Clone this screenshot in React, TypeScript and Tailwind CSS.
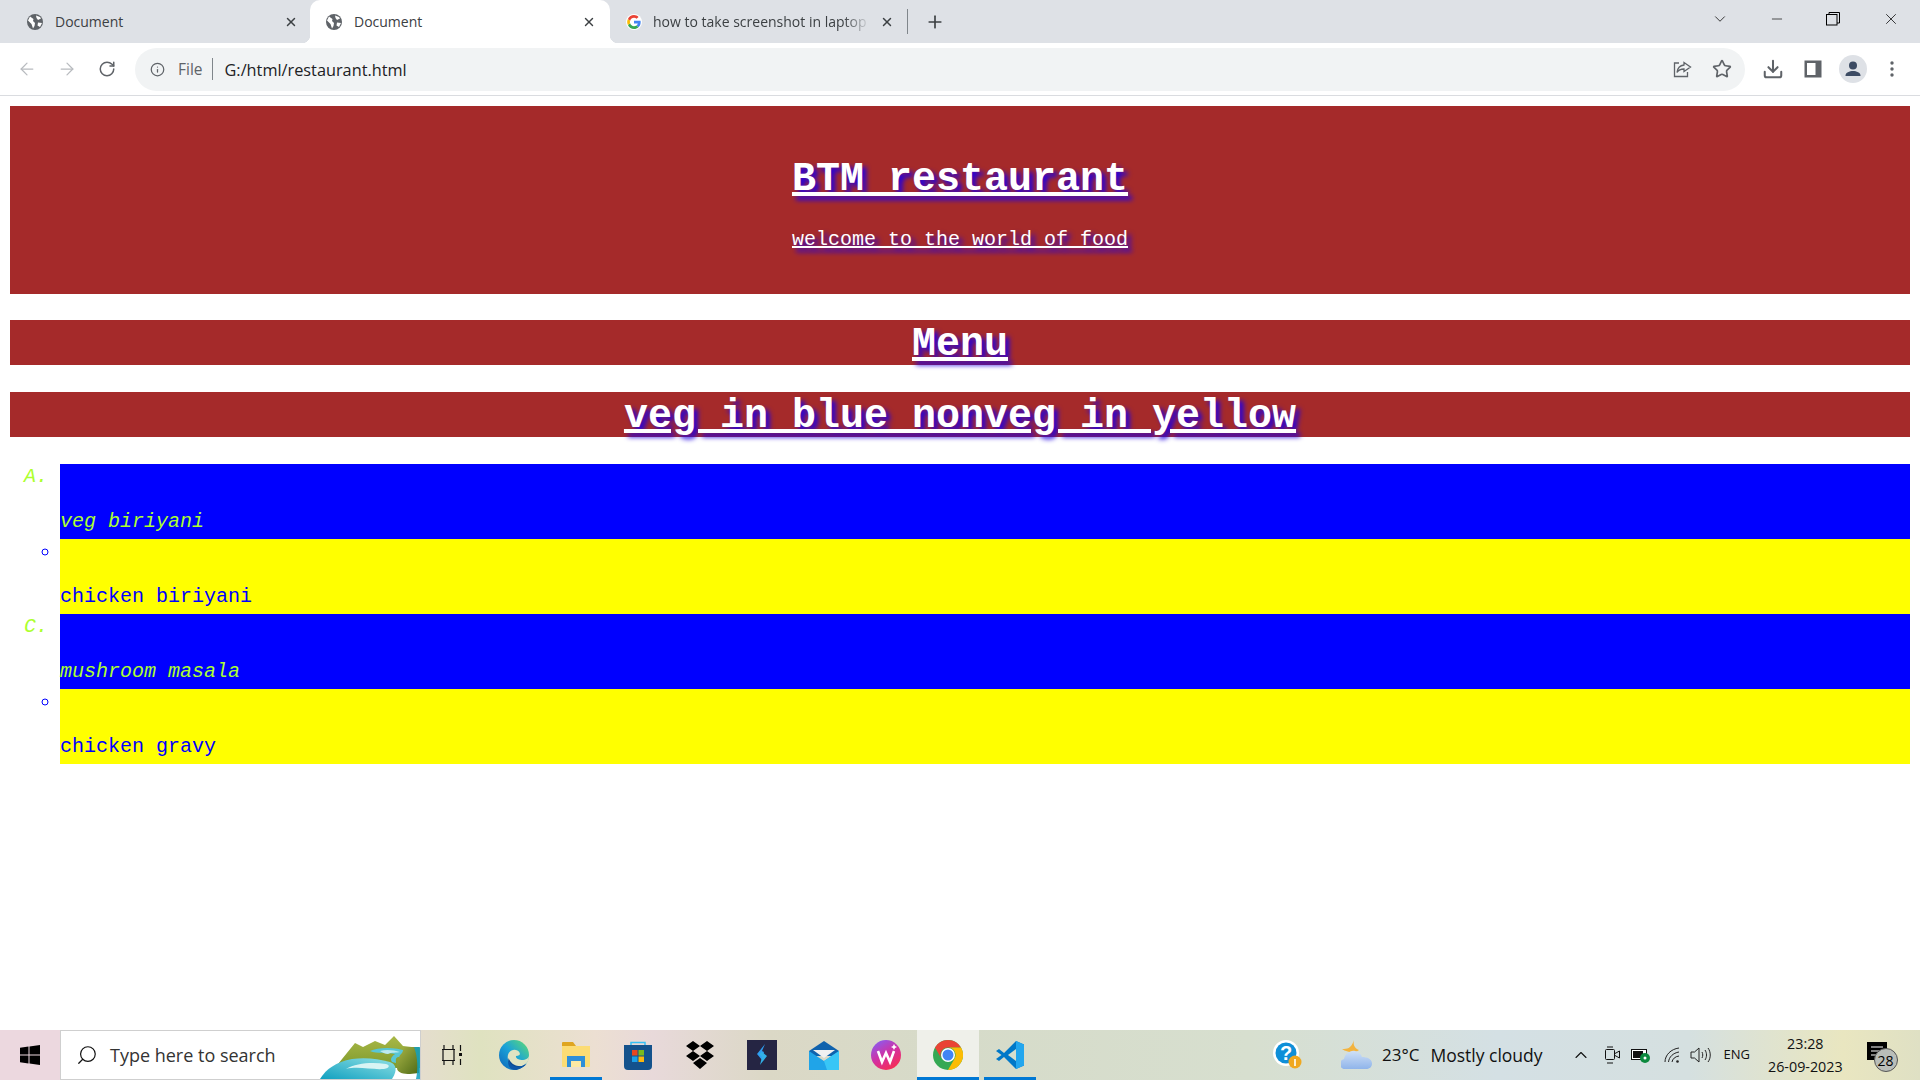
import { ArrowLeft, ArrowRight, ChevronDown, ChevronUp, Download, Info, Minus, Plus, RotateCw, Search, Star, X } from "lucide-react"

const Globe = () => (
  <svg width="16" height="16" viewBox="0 0 16 16">
    <circle cx="8" cy="8" r="8" fill="#5f6368" />
    <path d="M3 2.500 6.500 5 6 7 8 9 7.500 12 6 14.500 4.500 10 1 6.500ZM9 1.500 13 3 14 4.500 11 6 9.500 4ZM11 8.500 15 9 13 13 10.500 11.500Z" fill="#fff" />
  </svg>
)

const GoogleG = () => (
  <svg width="16" height="16" viewBox="0 0 48 48">
    <circle cx="24" cy="24" r="24" fill="#fff" />
    <path d="M44 24.500c0-1.500-.1-2.900-.4-4.200H24v8h11.300c-.5 2.600-2 4.800-4.200 6.300l6.500 5c3.800-3.500 6.400-8.700 6.400-15.100Z" fill="#4285f4" />
    <path d="M24 45c5.500 0 10-1.800 13.600-5.400l-6.500-5c-1.800 1.200-4.200 2-7.100 2-5.400 0-10-3.700-11.600-8.600l-6.700 5.200C9 40.900 15.900 45 24 45Z" fill="#34a853" />
    <path d="M12.400 28c-.4-1.200-.7-2.600-.7-4s.3-2.800.7-4l-6.700-5.200C4.300 17.600 3.500 20.700 3.500 24s.8 6.400 2.200 9.200Z" fill="#fbbc05" />
    <path d="M24 11.400c3 0 5.700 1 7.800 3.100l5.800-5.800C34 5.300 29.500 3 24 3 15.900 3 9 7.100 5.700 14.800l6.700 5.200C14 15.100 18.600 11.400 24 11.400Z" fill="#ea4335" />
  </svg>
)

const Flare = ({ side }: { side: "left" | "right" }) =>
  side === "left" ? (
    <span className="absolute bottom-0 left-[-8px] h-2 w-2 bg-[radial-gradient(circle_at_0_0,transparent_8px,white_8.5px)]" />
  ) : (
    <span className="absolute bottom-0 right-[-8px] h-2 w-2 bg-[radial-gradient(circle_at_100%_0,transparent_8px,white_8.5px)]" />
  )

const ShareIcon = () => (
  <svg width="20" height="20" viewBox="0 0 20 20" fill="none" stroke="#5f6368" strokeWidth="1.300">
    <path d="M7 4H2.500v13.500h13V13" />
    <path d="M12 3.500 18.500 8 12 12.500V10c-3.500 0-5.500 1-7 3.500.5-4.500 3-7 7-7.500Z" />
  </svg>
)

const PanelIcon = () => (
  <svg width="18" height="18" viewBox="0 0 18 18">
    <rect x="0.500" y="0.500" width="17" height="17" fill="#5f6368" />
    <rect x="3" y="3" width="8.500" height="12" fill="#fff" />
  </svg>
)

const Avatar = () => (
  <svg width="28" height="28" viewBox="0 0 28 28">
    <circle cx="14" cy="14" r="14" fill="#dee1e6" />
    <circle cx="14" cy="10.500" r="4" fill="#3c4b63" />
    <path d="M6.500 20.500c0-3 4-4.500 7.500-4.500s7.500 1.500 7.500 4.500V21h-15Z" fill="#3c4b63" />
  </svg>
)

const WindowsLogo = () => (
  <svg width="20" height="20" viewBox="0 0 20 20" fill="#000">
    <path d="M0 2.800 8.500 1.600V9.500H0ZM9.500 1.400 20 0V9.500H9.500ZM0 10.500H8.500V18.400L0 17.200ZM9.500 10.500H20V20L9.500 18.600Z" />
  </svg>
)

const SearchArt = () => (
  <svg width="100" height="50" viewBox="0 0 100 50" className="absolute bottom-0 right-0">
    <defs>
      <linearGradient id="hill" x1="0" y1="0" x2="0" y2="1">
        <stop offset="0" stopColor="#a9b847" />
        <stop offset="1" stopColor="#7f9a2c" />
      </linearGradient>
      <linearGradient id="hillDark" x1="0" y1="0" x2="1" y2="1">
        <stop offset="0" stopColor="#a8b446" />
        <stop offset="1" stopColor="#4e6a16" />
      </linearGradient>
      <linearGradient id="water" x1="0" y1="1" x2="1" y2="0">
        <stop offset="0" stopColor="#10a0c0" />
        <stop offset="1" stopColor="#8fe0e4" />
      </linearGradient>
    </defs>
    <path d="M18 35 35 14l8 4 12-6 10 4 9-9 9 10 17 2v20H30Z" fill="url(#hill)" />
    <path d="M0 50C6 40 16 33 32 30c14-2 26 0 38 3 6 2 8 8 2 17Z" fill="url(#water)" />
    <path d="M26 40c10-6 26-7 40-5 4 1 4 4-2 5-12 1-26-3-38 0Z" fill="#d8f4f4" />
    <path d="M50 22c8-4 26-4 36 0 2 3-2 6-8 6-3 1-2 4-2 6l-4-1c-3-4 2-7 3-8-8-2-18 0-25-3Z" fill="#58c6d6" />
    <path d="M60 22c6-2 14-1 20 1-3 1-9 0-12 2-3 0-6-2-8-3Z" fill="#bdeaf0" />
    <path d="M84 18h15v26l-9 1c-6 0-13-1-13-6 0-4 1-9 3-13 3-2 3-5 4-8Z" fill="url(#hillDark)" />
    <path d="M94 18h6v32h-4c2-8 2-22-2-32Z" fill="#10a0c0" opacity=".85" />
  </svg>
)

const TaskView = () => (
  <svg width="20" height="20" viewBox="0 0 20 20" fill="none" stroke="#111" strokeWidth="1.200">
    <path d="M0 4.500h13M0 15.500h13M2 0v4.500M11 0v4.500M2 15.500V20M11 15.500V20" />
    <path d="M1 4.500v11M12 4.500v11" />
    <path d="M18.500 0v6M18.500 14v6" strokeWidth="1.200" />
    <rect x="17" y="8" width="3" height="3" fill="#111" stroke="none" />
  </svg>
)

const Edge = () => (
  <svg width="30" height="30" viewBox="0 0 30 30">
    <defs>
      <linearGradient id="edge" x1="0" y1="1" x2="1" y2="0">
        <stop offset="0" stopColor="#0d63b8" />
        <stop offset="0.500" stopColor="#1ba3d8" />
        <stop offset="1" stopColor="#62de6e" />
      </linearGradient>
    </defs>
    <circle cx="15" cy="15" r="15" fill="url(#edge)" />
    <path d="M30 15.500c0 2.500-3 4.500-7.500 4.500-4 0-6-2-5.500-4 3.500 0 4.500-1.500 3.500-3.500-1.500-2.500-5-3.500-8-2-3 1.500-4.500 5-3.500 9 1 4.500 5 7.500 9.500 7.500 4 0 7-1.500 10-5 1-2 1.500-4 1.500-6.500Z" fill="#e0e3c2" />
    <path d="M9.500 18c-.5 6 4 10 10 10 3 0 6-1.500 8-4-2 1.500-5 2.500-8 2-4.500-.5-8-3-10-8Z" fill="#0b4a92" />
    <path d="M9.500 19c.5 3.500 3 7 7.500 7.500 3 .5 7 0 10-3-3 4-7 6.500-11 6.500-5 0-8-5-6.500-11Z" fill="#0c56a8" />
  </svg>
)

const Folder = () => (
  <svg width="28" height="28" viewBox="0 0 28 28">
    <path d="M0 2a1 1 0 0 1 1-1h10l3 4H0Z" fill="#dfa520" />
    <path d="M0 5h28v20a1 1 0 0 1-1 1H1a1 1 0 0 1-1-1Z" fill="#fcdc74" />
    <path d="M5 26V15h18v11h-4v-6H9v6Z" fill="#2f8fd8" />
    <path d="M9 20h10v6H9Z" fill="#fce9a4" />
  </svg>
)

const StoreIcon = () => (
  <svg width="30" height="30" viewBox="0 0 30 30">
    <path d="M8 6V2.500h14V6" fill="none" stroke="#35c0f5" strokeWidth="1.500" />
    <path d="M1 5h28v21a4 4 0 0 1-4 4H5a4 4 0 0 1-4-4Z" fill="#14528c" />
    <rect x="9" y="10" width="5.500" height="5.500" fill="#e8471f" />
    <rect x="15.500" y="10" width="5.500" height="5.500" fill="#79b91f" />
    <rect x="9" y="16.500" width="5.500" height="5.500" fill="#19a0e8" />
    <rect x="15.500" y="16.500" width="5.500" height="5.500" fill="#fcb70d" />
  </svg>
)

const Dropbox = () => (
  <svg width="30" height="30" viewBox="0 0 30 30" fill="#000">
    <path d="M8 1 15 6 8 11 1 6ZM22 1 29 6 22 11 15 6ZM8 11 15 16 8 21 1 16ZM22 11 29 16 22 21 15 16ZM15 18 22 23 15 29 8 23Z" />
  </svg>
)

const SlashApp = () => (
  <svg width="30" height="30" viewBox="0 0 30 30">
    <rect width="30" height="30" fill="#252543" />
    <path d="M18 4 10 14l5 6 2-8-2-1Z" fill="#2f9df0" />
    <path d="M15 12l5 4-7 9 2-8-3-3Z" fill="#32b0e8" />
  </svg>
)

const Mail = () => (
  <svg width="30" height="30" viewBox="0 0 30 30">
    <path d="M0 11 15 1l15 10v5H0Z" fill="#0f62ad" />
    <path d="M4 10h22l-11 8Z" fill="#f1f1f1" />
    <path d="M0 11 15 21l15-10v19H0Z" fill="#20a4e8" />
    <path d="M30 11v19H18l-3-9Z" fill="#38c6f6" />
  </svg>
)

const Wps = () => (
  <svg width="30" height="30" viewBox="0 0 30 30">
    <defs>
      <linearGradient id="wps" x1="0.200" y1="0" x2="0.800" y2="1">
        <stop offset="0" stopColor="#8a5cf0" />
        <stop offset="0.500" stopColor="#d42fa0" />
        <stop offset="1" stopColor="#fb2e4a" />
      </linearGradient>
    </defs>
    <circle cx="15" cy="15" r="15" fill="url(#wps)" />
    <path d="M7 11 11 22 15 13 19 22 23 11" fill="none" stroke="#fff" strokeWidth="2.600" />
    <path d="M23 4l1 2 2 1-2 1-1 2-1-2-2-1 2-1Z" fill="#fff" />
  </svg>
)

const ChromeLogo = () => (
  <svg width="30" height="30" viewBox="0 0 30 30">
    <circle cx="15" cy="15" r="15" fill="#34a853" />
    <path d="M15 0a15 15 0 0 1 13 7.500H15a7.500 7.500 0 0 0-6.500 11.250L2 7.500A15 15 0 0 1 15 0Z" fill="#ea4335" />
    <path d="M28 7.500A15 15 0 0 1 15 30l6.500-11.250A7.500 7.500 0 0 0 15 7.500Z" fill="#fbbc05" />
    <circle cx="15" cy="15" r="7" fill="#fff" />
    <circle cx="15" cy="15" r="5.500" fill="#4285f4" />
  </svg>
)

const VsCode = () => (
  <svg width="30" height="30" viewBox="0 0 30 30">
    <path d="M21 1 29 4.500v21L21 29 9 17l-5 4-3-2 5.500-4L1 11l3-2 5 4Z" fill="#0078c8" />
    <path d="M21 1 29 4.500v21L21 29Z" fill="#22a6ee" />
    <path d="M21 9 13 15l8 6Z" fill="#d6dfce" />
  </svg>
)

const HelpBadge = () => (
  <svg width="30" height="30" viewBox="0 0 30 30">
    <circle cx="13" cy="13" r="13" fill="#fff" />
    <circle cx="13" cy="13" r="10.500" fill="#0f8fd8" />
    <text x="13" y="20" textAnchor="middle" fontSize="20" fontWeight="700" fill="#fff" fontFamily="Liberation Sans">?</text>
    <circle cx="22" cy="22" r="6.500" fill="#f0a820" />
    <rect x="21.200" y="19" width="1.600" height="7" fill="#fff" />
  </svg>
)

const Weather = () => (
  <svg width="32" height="30" viewBox="0 0 32 30">
    <defs>
      <linearGradient id="cloud" x1="0" y1="0" x2="0" y2="1">
        <stop offset="0" stopColor="#cfe0f6" />
        <stop offset="1" stopColor="#8fb4ea" />
      </linearGradient>
    </defs>
    <path d="M13 0c-1 4 0 8 5 10-4 3-11 3-17-1 5 0 9 0 12-9Z" fill="#f3b33d" />
    <path d="M5 29a5 5 0 0 1-2-10c1-5 6-9 11-8 4 1 6 3 7 6 5 0 10 2 10 6.500 0 3-2 5.500-6 5.500Z" fill="url(#cloud)" />
  </svg>
)

const Camera = () => (
  <svg width="15" height="18" viewBox="0 0 15 18" fill="none" stroke="#111" strokeWidth="1">
    <rect x="0.500" y="3.500" width="9" height="10" rx="1" />
    <path d="M10 7.500 14.500 5v7L10 9.500M2 1h6M2 17h6" />
  </svg>
)

const Battery = () => (
  <svg width="20" height="16" viewBox="0 0 20 16">
    <rect x="0.500" y="2.500" width="15" height="10" fill="#fff" stroke="#111" />
    <rect x="2" y="4" width="10" height="7" fill="#111" />
    <circle cx="14" cy="11" r="5" fill="#0c8a3e" />
    <circle cx="14" cy="11" r="1.500" fill="#fff" />
  </svg>
)

const Wifi = () => (
  <svg width="16" height="17" viewBox="0 0 16 17" fill="none" stroke="#222" strokeWidth="1">
    <path d="M1 15C1 8 7 2 15 1M4.500 15C5 10 9 6 15 5M8 15c.5-3 3-5.500 7-6" />
    <circle cx="13.500" cy="14.500" r="1.300" fill="#222" stroke="none" />
  </svg>
)

const Volume = () => (
  <svg width="21" height="18" viewBox="0 0 21 18" fill="none" stroke="#222" strokeWidth="1">
    <path d="M1 6h3.500L9 2v14l-4.500-4H1Z" />
    <path d="M12 6c1 2 1 4 0 6M15 4c2 3 2 7 0 10M18 2c3 4 3 10 0 14" />
  </svg>
)

const Notification = () => (
  <div className="relative h-[26px] w-[31px]">
    <svg width="20" height="18" viewBox="0 0 20 18" className="absolute left-0 top-0">
      <rect width="20" height="18" fill="#000" />
      <path d="M4 5h12M4 9h12M4 13h8" stroke="#fff" strokeWidth="1.200" />
    </svg>
    <span className="absolute bottom-[-4px] right-0 flex h-[24px] w-[24px] items-center justify-center rounded-full border border-[#555] bg-[#b9bdb8] text-[14px] text-black">
      28
    </span>
  </div>
)

const TaskButton = ({ children, active, lit }: { children: React.ReactNode; active?: boolean; lit?: boolean }) => (
  <div className={`relative flex h-full w-[62px] items-center justify-center ${lit ? "bg-[#eff0ea]" : ""}`}>
    {children}
    {active && <span className="absolute bottom-0 left-[5px] right-[5px] h-[3px] bg-[#0078d4]" />}
    {lit && <span className="absolute bottom-0 left-0 right-0 h-[3px] bg-[#0078d4]" />}
  </div>
)

const titleClass = "font-bold text-[40px] leading-[45px] underline [text-shadow:4px_4px_5px_#2000e0]"

export default function App() {
  return (
    <div className="flex h-screen w-[1920px] flex-col overflow-hidden bg-white font-['Open_Sans',sans-serif]">
      <div className="flex h-[43px] shrink-0 items-stretch bg-[#dee1e6] text-[14px] text-[#3c4043]">
        <div className="flex w-[310px] items-center pl-[27px]">
          <Globe />
          <span className="ml-[12px] flex-1">Document</span>
          <X size={14} strokeWidth={2.500} className="mr-[12px] text-[#3c4043]" />
        </div>
        <div className="relative flex w-[300px] items-center rounded-t-[10px] bg-white pl-[16px]">
          <Flare side="left" />
          <Flare side="right" />
          <Globe />
          <span className="ml-[12px] flex-1">Document</span>
          <X size={14} strokeWidth={2.500} className="mr-[14px] text-[#3c4043]" />
        </div>
        <div className="flex w-[297px] items-center border-r-0 pl-[16px]">
          <GoogleG />
          <span className="ml-[11px] w-[217px] overflow-hidden whitespace-nowrap [mask-image:linear-gradient(90deg,black_88%,transparent)]">
            how to take screenshot in laptop
          </span>
          <X size={14} strokeWidth={2.500} className="ml-[10px] text-[#3c4043]" />
        </div>
        <div className="my-[9px] w-px bg-[#80868b]" />
        <div className="flex w-[54px] items-center justify-center">
          <Plus size={20} strokeWidth={2} className="text-[#3c4043]" />
        </div>
        <div className="flex flex-1 items-center justify-end pb-[5px] text-black">
          <ChevronDown size={18} strokeWidth={1} className="mr-[40px]" />
          <Minus size={16} strokeWidth={1} className="mr-[41px]" />
          <svg width="14" height="14" viewBox="0 0 14 14" fill="none" stroke="#000" strokeWidth="1" className="mr-[42px]">
            <rect x="0.500" y="2.500" width="10.500" height="10.500" />
            <path d="M3 2.500V.500h10.500V11H11" />
          </svg>
          <X size={18} strokeWidth={1} className="mr-[20px]" />
        </div>
      </div>

      <div className="flex h-[52px] shrink-0 items-center bg-white pl-[17px] text-[#5f6368]">
        <ArrowLeft size={20} strokeWidth={1.500} className="text-[#b8bbbf]" />
        <ArrowRight size={20} strokeWidth={1.500} className="ml-[20px] text-[#b8bbbf]" />
        <RotateCw size={18} strokeWidth={2} className="ml-[21px]" />
        <div className="ml-[19px] flex h-[43px] w-[1610px] items-center rounded-full bg-[#f1f3f4] pl-[15px] pr-[13px]">
          <Info size={15} strokeWidth={2} />
          <span className="ml-[13px] pt-px text-[15.500px]">File</span>
          <span className="ml-[9px] h-[22px] w-px bg-[#80868b]" />
          <span className="ml-[12px] flex-1 pt-[2px] text-[16.300px] text-[#202124]">G:/html/restaurant.html</span>
          <ShareIcon />
          <Star size={20} strokeWidth={2} className="ml-[20px]" />
        </div>
        <Download size={22} strokeWidth={2.200} className="ml-[17px]" />
        <div className="ml-[20px]"><PanelIcon /></div>
        <div className="ml-[17px]"><Avatar /></div>
        <svg width="4" height="16" viewBox="0 0 4 16" fill="#5f6368" className="ml-[23px]">
          <circle cx="2" cy="2" r="1.700" />
          <circle cx="2" cy="8" r="1.700" />
          <circle cx="2" cy="14" r="1.700" />
        </svg>
      </div>
      <div className="h-px shrink-0 bg-[#dadce0]" />

      <main className="flex-1 px-[10px] pt-[10px] font-['Liberation_Mono',monospace]">
        <header className="flex h-[188px] flex-col items-center bg-[#a52a2a] pt-[51px] text-white">
          <h1 className={titleClass}>BTM restaurant</h1>
          <p className="mt-[26px] text-[20px] leading-[23px] underline [text-shadow:4px_4px_5px_#2000e0]">welcome to the world of food</p>
        </header>
        <h1 className={`${titleClass} mt-[26px] h-[45px] bg-[#a52a2a] pt-[2px] text-center text-white`}>Menu</h1>
        <h1 className={`${titleClass} mt-[27px] h-[45px] bg-[#a52a2a] pt-[2px] text-center text-white`}>veg in blue nonveg in yellow</h1>
        <ol className="mt-[27px] pl-[50px] text-[20px] leading-[22.500px]">
          <li className="h-[75px] list-[upper-alpha] bg-[#0000ff] pt-[2px] italic text-[#adff2f]">
            <br />
            <br />
            veg biriyani
          </li>
          <li className="h-[75px] list-[circle] bg-[#ffff00] pt-[2px] text-[#0000ff]">
            <br />
            <br />
            chicken biriyani
          </li>
          <li className="h-[75px] list-[upper-alpha] bg-[#0000ff] pt-[2px] italic text-[#adff2f]">
            <br />
            <br />
            mushroom masala
          </li>
          <li className="h-[75px] list-[circle] bg-[#ffff00] pt-[2px] text-[#0000ff]">
            <br />
            <br />
            chicken gravy
          </li>
        </ol>
      </main>

      <footer className="flex h-[50px] shrink-0 items-center bg-[linear-gradient(90deg,#ecd8df_0%,#ecd8df_18%,#dfe2c0_25%,#ecdfd2_31%,#e8d9da_34%,#dbd8c6_40%,#d6dbc9_50%,#d7dfcf_65%,#d4e0e4_78%,#d5e0e0_88%,#e9e6c0_96%,#dfe0c4_100%)] text-[#111]">
        <div className="flex w-[60px] justify-center"><WindowsLogo /></div>
        <div className="relative flex h-full w-[361px] items-center border-[1px] border-[#cfcfcf] bg-white pl-[15px]">
          <Search size={22} strokeWidth={1.300} className="-scale-x-100 text-[#111]" />
          <span className="ml-[12px] text-[18px] text-[#333]">Type here to search</span>
          <SearchArt />
        </div>
        <div className="flex h-full">
          <TaskButton><TaskView /></TaskButton>
          <TaskButton><Edge /></TaskButton>
          <TaskButton active><Folder /></TaskButton>
          <TaskButton><StoreIcon /></TaskButton>
          <TaskButton><Dropbox /></TaskButton>
          <TaskButton><SlashApp /></TaskButton>
          <TaskButton><Mail /></TaskButton>
          <TaskButton><Wps /></TaskButton>
          <TaskButton lit><ChromeLogo /></TaskButton>
          <TaskButton active><VsCode /></TaskButton>
        </div>
        <div className="ml-[232px]"><HelpBadge /></div>
        <div className="ml-[38px]"><Weather /></div>
        <span className="ml-[9px] text-[17px]">23°C</span>
        <span className="ml-[11px] text-[17.500px]">Mostly cloudy</span>
        <ChevronUp size={20} strokeWidth={1.300} className="ml-[28px]" />
        <div className="ml-[14px]"><Camera /></div>
        <div className="ml-[11px]"><Battery /></div>
        <div className="ml-[13px]"><Wifi /></div>
        <div className="ml-[10px]"><Volume /></div>
        <span className="ml-[13px] text-[13px]">ENG</span>
        <div className="ml-[18px] flex flex-col items-center text-[14.300px] leading-[23px]">
          <span>23:28</span>
          <span>26-09-2023</span>
        </div>
        <div className="ml-[24px]"><Notification /></div>
      </footer>
    </div>
  )
}
